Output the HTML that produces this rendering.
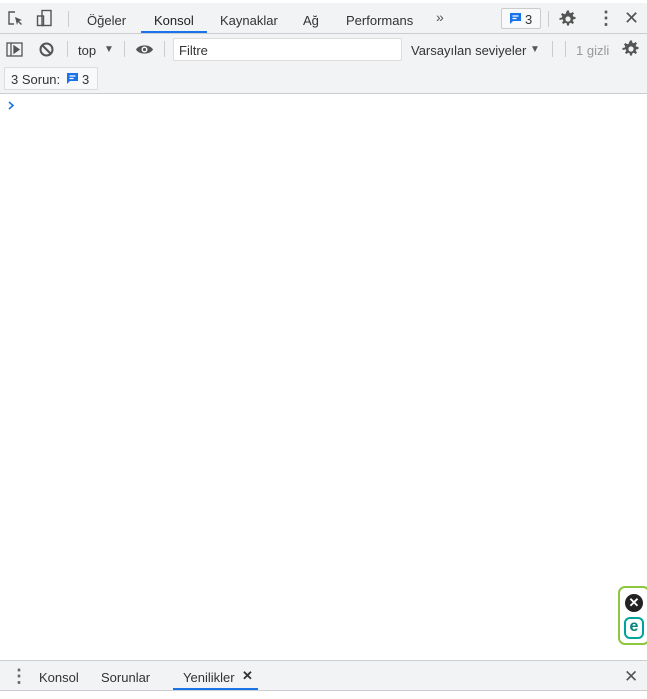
<!DOCTYPE html><html><head><style>
*{box-sizing:border-box;margin:0;padding:0}
body{width:647px;height:699px;background:#fff;font-family:"Liberation Sans",sans-serif;font-size:13px;color:#333;position:relative;overflow:hidden}
.a{position:absolute}
.bar{position:absolute;left:0;width:647px;background:#f1f3f4}
.t{position:absolute;font-size:13px;color:#333;white-space:nowrap}
.sep{position:absolute;width:1px;background:#ccc}
</style></head><body>
<svg width="0" height="0" style="position:absolute"><defs><g id="gear"><path d="M8 0.5h2l.4 2.2 1.4.6 1.8-1.3 1.4 1.4-1.3 1.8.6 1.4 2.2.4v2l-2.2.4-.6 1.4 1.3 1.8-1.4 1.4-1.8-1.3-1.4.6-.4 2.2H8l-.4-2.2-1.4-.6-1.8 1.3-1.4-1.4 1.3-1.8-.6-1.4L.5 10V8l2.2-.4.6-1.4L2 4.4 3.4 3l1.8 1.3 1.4-.6z" fill="#555"/><circle cx="9" cy="9" r="2.6" fill="#f1f3f4"/></g></defs></svg>
<div class="bar" style="top:0;height:34px;border-top:3px solid #fff;border-bottom:1px solid #cbcdd1"></div>
<div class="bar" style="top:34px;height:30px"></div>
<div class="bar" style="top:64px;height:30px;border-bottom:1px solid #cbcdd1"></div>
<svg class="a" style="left:7px;top:10px" width="18" height="18" viewBox="0 0 18 18" fill="none" stroke="#555" stroke-width="1.4"><path d="M8 2H2v12h5"/><path d="M8 7l7 3-3 1 3 3-1 1-3-3-1 3z" fill="#555" stroke="none"/></svg>
<svg class="a" style="left:36px;top:9px" width="18" height="18" viewBox="0 0 18 18" fill="none" stroke="#555" stroke-width="1.4"><rect x="6" y="1.5" width="9" height="15"/><rect x="1.5" y="7" width="6" height="9.5"/></svg>
<div class="sep" style="left:68px;top:11px;height:16px"></div>
<div class="t" style="left:87px;top:13px">Öğeler</div>
<div class="t" style="left:154px;top:13px;color:#1f1f1f">Konsol</div>
<div class="a" style="left:141px;top:31px;width:66px;height:2px;background:#1a73e8"></div>
<div class="t" style="left:220px;top:13px">Kaynaklar</div>
<div class="t" style="left:303px;top:13px">Ağ</div>
<div class="t" style="left:346px;top:13px">Performans</div>
<div class="t" style="left:436px;top:9px;font-size:14px;color:#555">»</div>
<div class="a" style="left:501px;top:8px;width:40px;height:21px;border:1px solid #ccc;border-radius:2px;background:#f8f9fa"></div>
<svg class="a" style="left:509px;top:12px" width="13" height="13" viewBox="0 0 13 13"><path d="M1 1h11v8H4l-3 3z" fill="#1a73e8"/><path d="M3.5 4h6M3.5 6.5h4" stroke="#fff" stroke-width="1.2"/></svg>
<div class="t" style="left:525px;top:12px">3</div>
<div class="sep" style="left:548px;top:11px;height:16px"></div>
<svg class="a" style="left:559px;top:10px" width="18" height="18" viewBox="0 0 18 18"><use href="#gear"/></svg>
<div class="t" style="left:597px;top:8px;font-size:18px;color:#555;font-weight:bold">⋮</div>
<div class="t" style="left:624px;top:8px;font-size:18px;color:#555">✕</div>
<svg class="a" style="left:6px;top:42px" width="17" height="15" viewBox="0 0 17 15" fill="none" stroke="#555" stroke-width="1.3"><rect x="1" y="1" width="15" height="13"/><path d="M5 1v13"/><path d="M8 4l5 3.5-5 3.5z" fill="#555"/></svg>
<svg class="a" style="left:39px;top:42px" width="15" height="15" viewBox="0 0 15 15" fill="none" stroke="#555" stroke-width="2"><circle cx="7.5" cy="7.5" r="6"/><path d="M3.5 3.5l8 8"/></svg>
<div class="sep" style="left:67px;top:41px;height:16px"></div>
<div class="t" style="left:78px;top:43px">top</div>
<div class="t" style="left:104px;top:44px;font-size:10px;color:#555">▼</div>
<div class="sep" style="left:124px;top:41px;height:16px"></div>
<svg class="a" style="left:135px;top:43px" width="19" height="13" viewBox="0 0 19 13"><path d="M1 6.5C4 1 15 1 18 6.5 15 12 4 12 1 6.5z" fill="#555"/><circle cx="9.5" cy="6.5" r="3" fill="#fff"/><circle cx="9.5" cy="6.5" r="1.6" fill="#555"/></svg>
<div class="sep" style="left:164px;top:41px;height:16px"></div>
<div class="a" style="left:173px;top:38px;width:229px;height:23px;background:#fff;border:1px solid #ddd;border-radius:2px"></div>
<div class="t" style="left:179px;top:43px">Filtre</div>
<div class="t" style="left:411px;top:43px">Varsayılan seviyeler</div>
<div class="t" style="left:530px;top:44px;font-size:10px;color:#555">▼</div>
<div class="sep" style="left:552px;top:41px;height:16px"></div>
<div class="sep" style="left:565px;top:41px;height:16px"></div>
<div class="t" style="left:576px;top:43px;color:#999">1 gizli</div>
<svg class="a" style="left:622px;top:40px" width="18" height="18" viewBox="0 0 18 18"><use href="#gear"/></svg>
<div class="a" style="left:4px;top:67px;width:94px;height:23px;border:1px solid #ddd;background:#f8f9fa"></div>
<div class="t" style="left:11px;top:72px">3 Sorun:</div>
<svg class="a" style="left:66px;top:72px" width="13" height="13" viewBox="0 0 13 13"><path d="M1 1h11v8H4l-3 3z" fill="#1a73e8"/><path d="M3.5 4h6M3.5 6.5h4" stroke="#fff" stroke-width="1.2"/></svg>
<div class="t" style="left:82px;top:72px">3</div>
<svg class="a" style="left:7px;top:101px" width="8" height="9" viewBox="0 0 8 9"><path d="M2 1l4 3.5L2 8" stroke="#1a73e8" stroke-width="1.6" fill="none"/></svg>
<div class="a" style="left:618px;top:586px;width:32px;height:59px;border:2px solid #8dc63f;border-radius:7px;background:#fff"></div>
<div class="a" style="left:625px;top:594px;width:18px;height:18px;border-radius:50%;background:#222;color:#fff;font-size:13px;font-weight:bold;text-align:center;line-height:18px">✕</div>
<div class="a" style="left:624px;top:617px;width:20px;height:22px;border:2.5px solid #00a39b;border-radius:6px;color:#00857f;font-weight:bold;font-size:16px;text-align:center;line-height:16px">e</div>
<div class="bar" style="top:660px;height:31px;border-top:1px solid #cbcdd1;border-bottom:1px solid #cbcdd1"></div>
<div class="t" style="left:10px;top:666px;font-size:18px;color:#666;font-weight:bold">⋮</div>
<div class="t" style="left:39px;top:670px">Konsol</div>
<div class="t" style="left:101px;top:670px">Sorunlar</div>
<div class="t" style="left:183px;top:670px">Yenilikler</div>
<div class="t" style="left:242px;top:668px;font-size:13px;font-weight:bold">✕</div>
<div class="a" style="left:173px;top:688px;width:85px;height:2px;background:#1a73e8"></div>
<div class="t" style="left:624px;top:667px;font-size:17px;color:#555">✕</div>
</body></html>
